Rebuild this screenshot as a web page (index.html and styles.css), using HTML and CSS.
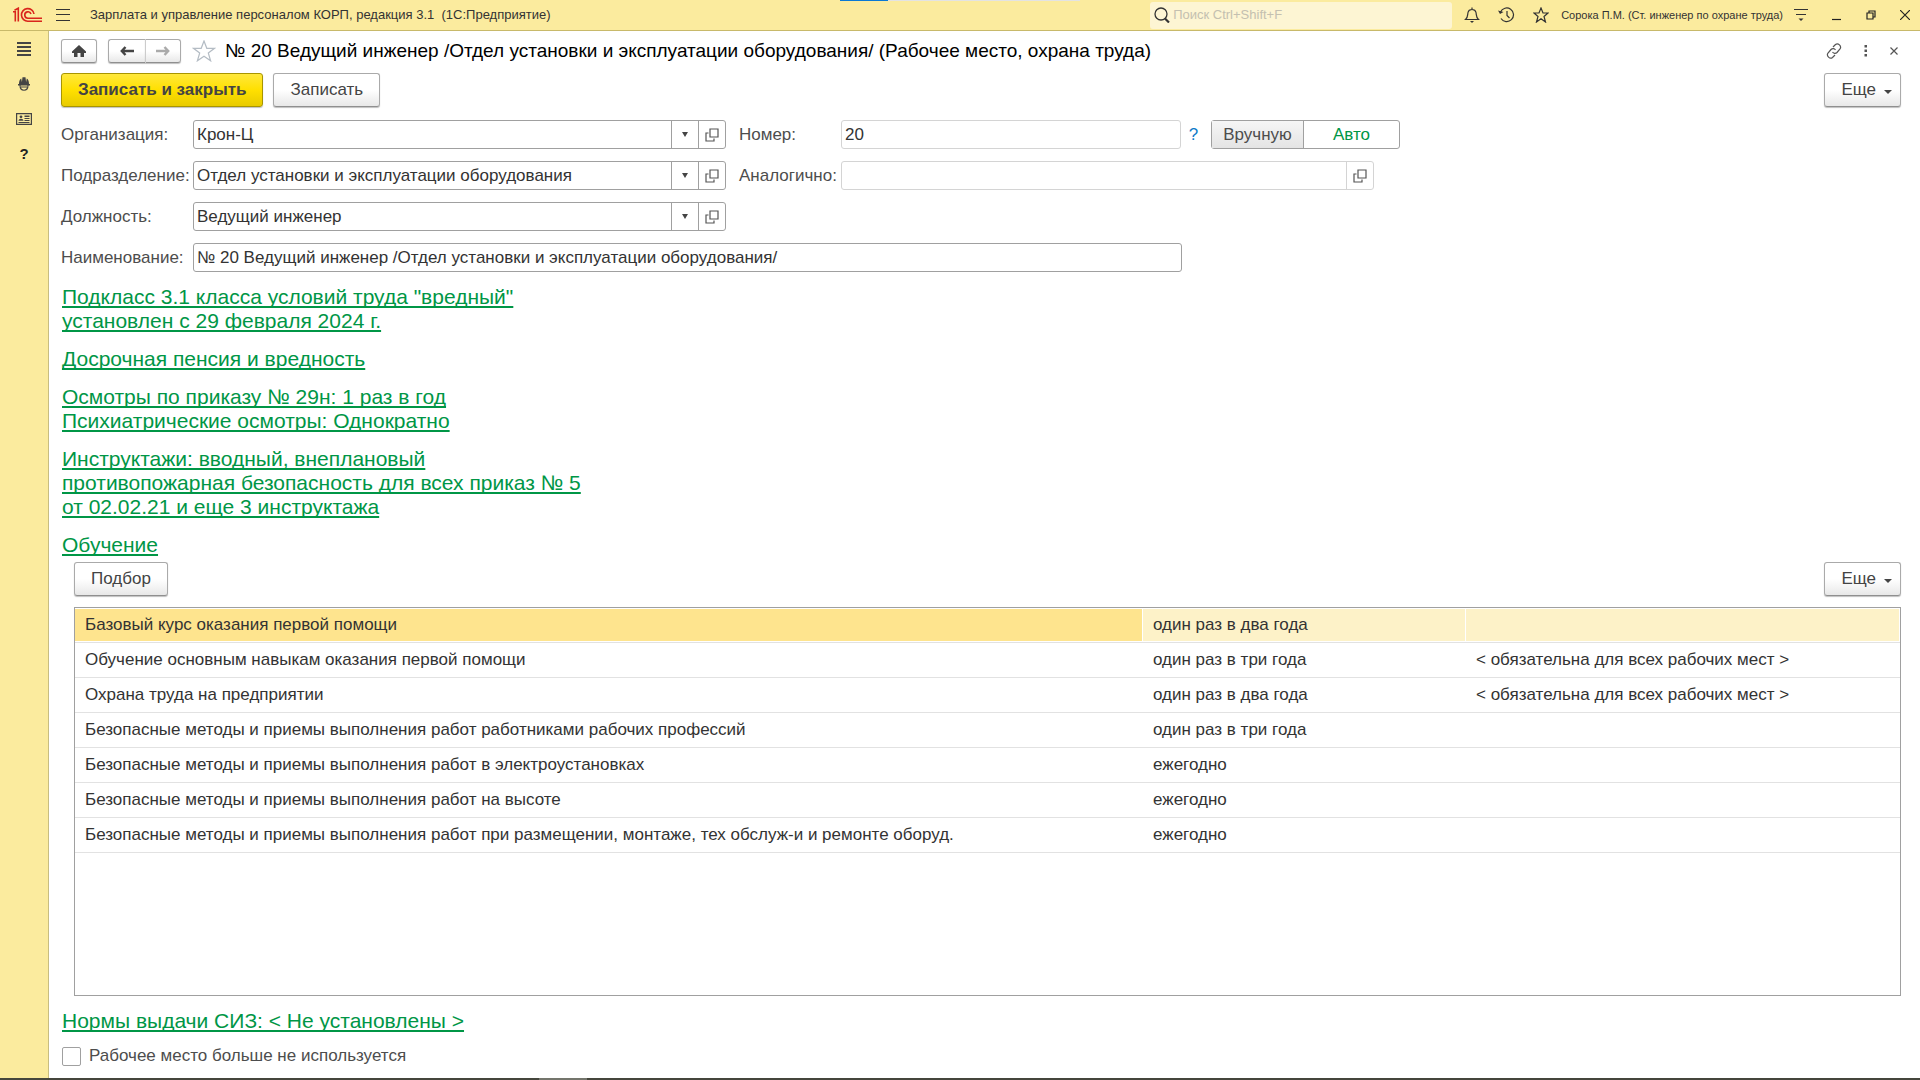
FILE: index.html
```html
<!DOCTYPE html>
<html lang="ru">
<head>
  <meta charset="UTF-8" />
  <title>Рабочее место, охрана труда</title>
  <link rel="stylesheet" href="styles.css">
</head>
<body>

  <!-- Title bar -->
  <header class="topbar">
    <svg class="logo" width="30" height="16" viewBox="0 0 30 16" fill="none" stroke="#d9251c" stroke-width="1.600">
      <path d="M1 4.800H3.300V14.500M2.500 3.200L6.300 1.200V14.500" />
      <path d="M22 7A6.300 6.300 0 1 0 16 14.200H30" />
      <path d="M19 7A3.200 3.200 0 1 0 16 11.200H30" />
    </svg>
    <button class="icon-btn menu-btn" aria-label="Меню">
      <svg width="14" height="12" viewBox="0 0 14 12" stroke="#333" stroke-width="1"><path d="M0 .5H14M0 5.500H14M0 11.500H14" /></svg>
    </button>
    <div class="app-title">Зарплата и управление персоналом КОРП, редакция 3.1&nbsp; (1С:Предприятие)</div>
    <div class="load-bar"><span></span></div>

    <div class="search">
      <svg width="16" height="16" viewBox="0 0 16 16" fill="none" stroke="#333"><circle cx="7" cy="7" r="6" stroke-width="1.300" /><path d="M11 11.500L15 15.500" stroke-width="2.200" /></svg>
      <input type="text" placeholder="Поиск Ctrl+Shift+F" aria-label="Поиск">
    </div>

    <div class="top-icons">
      <button class="icon-btn" aria-label="Уведомления">
        <svg width="16" height="16" viewBox="0 0 16 16" fill="none" stroke="#333" stroke-width="1.200"><path d="M1.500 12.500C4 10.500 3.500 8 4 5.500C4.500 3 6 2.500 8 2.500S11.500 3 12 5.500C12.500 8 12 10.500 14.500 12.500ZM8 0.500V2.500" /><path d="M6 14H10L8 16Z" fill="#333" stroke="none" /></svg>
      </button>
      <button class="icon-btn" aria-label="История">
        <svg width="17" height="16" viewBox="0 0 17 16" fill="none" stroke="#333" stroke-width="1.200"><path d="M2.500 5A6.800 6.800 0 1 1 3 11.500M9 4V8.500L11.500 11" /><path d="M0 3.500L2 7L5.500 5Z" fill="#333" stroke="none" /></svg>
      </button>
      <button class="icon-btn" aria-label="Избранное">
        <svg width="16" height="16" viewBox="0 0 16 16" fill="none" stroke="#333" stroke-width="1.200"><path d="M8 1L10 6H15L11 9.500L12.500 15L8 11.800L3.500 15L5 9.500L1 6H6Z" /></svg>
      </button>
    </div>
    <div class="user">Сорока П.М. (Ст. инженер по охране труда)</div>
    <div class="window-icons">
      <button class="icon-btn" aria-label="Настройки">
        <svg width="14" height="14" viewBox="0 0 14 14" stroke="#333" stroke-width="1.200"><path d="M0 1.500H14M2 6.500H12" /><path d="M4.500 10.500H9.500L7 13Z" fill="#333" stroke="none" /></svg>
      </button>
      <button class="icon-btn" aria-label="Свернуть">
        <svg width="10" height="12" viewBox="0 0 10 12" stroke="#222" stroke-width="1.200"><path d="M0 10.500H9" /></svg>
      </button>
      <button class="icon-btn" aria-label="Развернуть">
        <svg width="10" height="10" viewBox="0 0 10 10" fill="none" stroke="#222" stroke-width="1.200"><path d="M1 3H7V9H1ZM3 3V1H9V7H7" /></svg>
      </button>
      <button class="icon-btn" aria-label="Закрыть">
        <svg width="10" height="10" viewBox="0 0 10 10" stroke="#222" stroke-width="1.200"><path d="M0 0L10 10M10 0L0 10" /></svg>
      </button>
    </div>
  </header>

  <div class="layout">
    <nav class="sidebar">
      <button class="icon-btn" aria-label="Разделы">
        <svg width="14" height="14" viewBox="0 0 14 14" fill="#444"><path d="M0 0H14V2H0ZM0 4H14V6H0ZM0 8H14V10H0ZM0 12H14V14H0Z" /></svg>
      </button>
      <button class="icon-btn" aria-label="Охрана труда">
        <svg width="12" height="14" viewBox="0 0 12 14" fill="#444"><path d="M1 7C1 4 1.800 2.300 3.200 1.500L3.900 5L4.500 .3H7.500L8.100 5L8.800 1.500C10.200 2.300 11 4 11 7H12V8.500H0V7Z" /><path d="M2 8C2 15 10 15 10 8M3 10H9" fill="none" stroke="#444" stroke-width="1.200" /></svg>
      </button>
      <button class="icon-btn" aria-label="Кадры">
        <svg width="16" height="12" viewBox="0 0 16 12" fill="#444"><path d="M.6.6H15.400V11.400H.6Z" fill="none" stroke="#444" stroke-width="1.200" /><circle cx="5" cy="3.800" r="1.400" /><path d="M2.500 7.800C2.500 5 7.500 5 7.500 7.800ZM8.500 2.500H13.500V4H8.500ZM8.500 5H13.500V6H8.500ZM8.500 7H13.500V8H8.500ZM2.500 9H13.500V10H2.500Z" /></svg>
      </button>
      <button class="icon-btn help" aria-label="Справка">?</button>
    </nav>

    <main class="page">
      <!-- Form header -->
      <div class="page-head">
        <button class="btn nav-btn" aria-label="Домой">
          <svg width="14" height="12" viewBox="0 0 14 12" fill="#444"><path d="M7 0L0 6.500V8H2V12H5.500V8H8.500V12H12V8H14V6.500Z" /></svg>
        </button>
        <div class="nav-pair">
          <button class="btn nav-btn" aria-label="Назад">
            <svg width="14" height="10" viewBox="0 0 14 10" fill="none" stroke="#444" stroke-width="2.400"><path d="M2 5H14M5.500 1L1.800 5L5.500 9" /></svg>
          </button>
          <button class="btn nav-btn" aria-label="Вперед">
            <svg width="14" height="10" viewBox="0 0 14 10" fill="none" stroke="#aaa" stroke-width="2.400"><path d="M0 5H12M8.500 1L12.200 5L8.500 9" /></svg>
          </button>
        </div>
        <button class="icon-btn" aria-label="В избранное">
          <svg width="24" height="22" viewBox="0 0 24 22" fill="none" stroke="#b4bcc4" stroke-width="1.200"><path d="M12 1L14.800 8.300H22.500L16.300 13L18.600 20.800L12 16.200L5.400 20.800L7.700 13L1.500 8.300H9.200Z" /></svg>
        </button>
        <h1>№ 20 Ведущий инженер /Отдел установки и эксплуатации оборудования/ (Рабочее место, охрана труда)</h1>
        <div class="page-tools">
          <button class="icon-btn" aria-label="Ссылка">
            <svg width="16" height="16" viewBox="0 0 16 16" fill="none" stroke="#555" stroke-width="1.200"><path d="M7 4L9.500 1.500C12 -.5 16 3 14 6L11 9.500C9.500 11 7.500 10.500 6.500 9M9 12L6.500 14.500C4 16.500 0 13 2 10L5 6.500C6.500 5 8.500 5.500 9.500 7" /></svg>
          </button>
          <button class="icon-btn" aria-label="Еще действия">
            <svg width="4" height="12" viewBox="0 0 4 12" fill="#555"><path d="M.5 0H3V2.500H.5ZM.5 4.500H3V7H.5ZM.5 9H3V11.500H.5Z" /></svg>
          </button>
          <button class="icon-btn" aria-label="Закрыть форму">
            <svg width="8" height="8" viewBox="0 0 8 8" stroke="#555" stroke-width="1.200"><path d="M0.500 0.500L7.500 7.500M7.500 0.500L0.500 7.500" /></svg>
          </button>
        </div>
      </div>

      <div class="commands">
        <button class="btn primary">Записать и закрыть</button>
        <button class="btn">Записать</button>
        <button class="btn more">Еще <span class="caret"></span></button>
      </div>

      <!-- Fields -->
      <div class="fields">
        <label for="org">Организация:</label>
        <div class="field">
          <input type="text" id="org" value="Крон-Ц">
          <button aria-label="Выбрать"><span class="caret"></span></button>
          <button aria-label="Открыть"><svg width="14" height="14" viewBox="0 0 14 14" fill="none" stroke="#555" stroke-width="1.200"><path d="M5 1H13V9H5ZM3.500 5H1V13H9V10.500" /></svg></button>
        </div>
        <label for="number">Номер:</label>
        <div class="number-row">
          <div class="field light"><input type="text" id="number" value="20"></div>
          <a class="hint" href="#">?</a>
          <div class="switch">
            <button class="pressed">Вручную</button>
            <button>Авто</button>
          </div>
        </div>

        <label for="dept">Подразделение:</label>
        <div class="field">
          <input type="text" id="dept" value="Отдел установки и эксплуатации оборудования">
          <button aria-label="Выбрать"><span class="caret"></span></button>
          <button aria-label="Открыть"><svg width="14" height="14" viewBox="0 0 14 14" fill="none" stroke="#555" stroke-width="1.200"><path d="M5 1H13V9H5ZM3.500 5H1V13H9V10.500" /></svg></button>
        </div>
        <label for="same">Аналогично:</label>
        <div class="field light same">
          <input type="text" id="same">
          <button aria-label="Открыть"><svg width="14" height="14" viewBox="0 0 14 14" fill="none" stroke="#555" stroke-width="1.200"><path d="M5 1H13V9H5ZM3.500 5H1V13H9V10.500" /></svg></button>
        </div>

        <label for="post">Должность:</label>
        <div class="field">
          <input type="text" id="post" value="Ведущий инженер">
          <button aria-label="Выбрать"><span class="caret"></span></button>
          <button aria-label="Открыть"><svg width="14" height="14" viewBox="0 0 14 14" fill="none" stroke="#555" stroke-width="1.200"><path d="M5 1H13V9H5ZM3.500 5H1V13H9V10.500" /></svg></button>
        </div>

        <label class="name-label" for="name">Наименование:</label>
        <div class="field name">
          <input type="text" id="name" value="№ 20 Ведущий инженер /Отдел установки и эксплуатации оборудования/">
        </div>
      </div>

      <!-- Sections -->
      <div class="links">
        <a href="#">Подкласс 3.1 класса условий труда "вредный"<br>установлен с 29 февраля 2024 г.</a>
        <a href="#">Досрочная пенсия и вредность</a>
        <a href="#">Осмотры по приказу № 29н: 1 раз в год<br>Психиатрические осмотры: Однократно</a>
        <a href="#">Инструктажи: вводный, внеплановый<br>противопожарная безопасность для всех приказ № 5<br>от 02.02.21 и еще 3 инструктажа</a>
        <a href="#">Обучение</a>
      </div>

      <section class="training">
        <div class="commands">
          <button class="btn">Подбор</button>
          <button class="btn more">Еще <span class="caret"></span></button>
        </div>
        <div class="table-box">
          <table>
            <colgroup><col class="col-course"><col class="col-period"><col></colgroup>
            <tbody>
              <tr class="selected"><td class="current">Базовый курс оказания первой помощи</td><td>один раз в два года</td><td></td></tr>
              <tr><td>Обучение основным навыкам оказания первой помощи</td><td>один раз в три года</td><td>&lt; обязательна для всех рабочих мест &gt;</td></tr>
              <tr><td>Охрана труда на предприятии</td><td>один раз в два года</td><td>&lt; обязательна для всех рабочих мест &gt;</td></tr>
              <tr><td>Безопасные методы и приемы выполнения работ работниками рабочих профессий</td><td>один раз в три года</td><td></td></tr>
              <tr><td>Безопасные методы и приемы выполнения работ в электроустановках</td><td>ежегодно</td><td></td></tr>
              <tr><td>Безопасные методы и приемы выполнения работ на высоте</td><td>ежегодно</td><td></td></tr>
              <tr><td>Безопасные методы и приемы выполнения работ при размещении, монтаже, тех обслуж-и и ремонте оборуд.</td><td>ежегодно</td><td></td></tr>
            </tbody>
          </table>
        </div>
      </section>

      <div class="links">
        <a href="#">Нормы выдачи СИЗ: &lt; Не установлены &gt;</a>
      </div>
      <div class="unused">
        <input type="checkbox" id="unused">
        <label for="unused">Рабочее место больше не используется</label>
      </div>
    </main>
  </div>

  <div class="bottom-edge"><span></span></div>

</body>
</html>
```

FILE: styles.css
```css
* {
  box-sizing: border-box;
}

body {
  margin: 0;
  height: 100vh;
  display: flex;
  flex-direction: column;
  font-family: "Liberation Sans", Arial, sans-serif;
  font-size: 17px;
  line-height: 20px;
  color: #333;
  background: white;
}

button,
input {
  font: inherit;
  color: inherit;
}

button {
  padding: 0;
  cursor: pointer;
}

svg {
  display: block;
  flex: none;
}

.icon-btn {
  display: flex;
  align-items: center;
  justify-content: center;
  border: none;
  background: none;
}

/* Title bar */
.topbar {
  position: relative;
  display: flex;
  align-items: center;
  height: 31px;
  padding: 0 10px 0 12px;
  background: #fbeb9e;
  border-bottom: 1px solid #c8b96a;
}

.menu-btn {
  margin: 0 20px 0 14px;
}

.app-title {
  font-size: 13px;
  white-space: nowrap;
}

.load-bar {
  position: absolute;
  top: 0;
  left: 840px;
  width: 240px;
  height: 1px;
  background: #e3e3e3;
}

.load-bar span {
  display: block;
  width: 48px;
  height: 1px;
  background: #0a78d4;
}

.search {
  display: flex;
  align-items: center;
  gap: 3px;
  width: 302px;
  height: 27px;
  margin-left: auto;
  padding-left: 4px;
  border-radius: 3px;
  background: #fdf5d3;
}

.search input {
  flex: 1;
  min-width: 0;
  padding: 0;
  border: none;
  outline: none;
  background: none;
  font-size: 13px;
}

.search input::placeholder {
  color: #c4c0b0;
}

.top-icons {
  display: flex;
  gap: 18px;
  margin: 0 12px;
}

.user {
  font-size: 11px;
  white-space: nowrap;
}

.window-icons {
  display: flex;
  align-items: center;
  gap: 24px;
  margin-left: 11px;
}

/* Layout */
.layout {
  flex: 1;
  display: flex;
  min-height: 0;
}

.sidebar {
  width: 49px;
  display: flex;
  flex-direction: column;
  align-items: center;
  gap: 15px;
  padding-top: 8px;
  background: #fbeb9e;
  border-right: 1px solid #c8bd80;
}

.sidebar .icon-btn {
  width: 30px;
  height: 20px;
}

.sidebar .help {
  font-weight: bold;
  font-size: 15px;
  color: #222;
}

.page {
  flex: 1;
  min-width: 0;
  display: flex;
  flex-direction: column;
  padding: 8px 19px 12px 12px;
}

/* Buttons */
.btn {
  display: flex;
  align-items: center;
  justify-content: center;
  height: 34px;
  padding: 0 16px;
  border: 1px solid #aaa;
  border-bottom-color: #8f8f8f;
  border-radius: 3px;
  background: linear-gradient(white 50%, #e8e8e8);
  box-shadow: 0 1px 1px rgba(0, 0, 0, 0.25);
  color: #444;
}

.primary {
  background: linear-gradient(#ffe83c, #ffe000 50%, #e8cb00);
  border-color: #a89500;
  font-weight: bold;
}

.caret {
  border: 4px solid transparent;
  border-top-color: #444;
  border-bottom: none;
}

.more {
  gap: 8px;
  margin-left: auto;
  padding: 0 8px 0 16px;
}

.more .caret {
  margin-top: 4px;
}

.page-head {
  display: flex;
  align-items: center;
  height: 24px;
}

.nav-btn {
  width: 36px;
  height: 24px;
  padding: 0;
}

.nav-pair {
  display: flex;
  margin: 0 11px;
}

.nav-pair .nav-btn:first-child {
  width: 37px;
  border-right: none;
  border-radius: 3px 0 0 3px;
}

.nav-pair .nav-btn:last-child {
  border-radius: 0 3px 3px 0;
  border-left-color: #ccc;
}

h1 {
  margin: 0 0 0 9px;
  font-size: 19px;
  font-weight: normal;
  color: black;
  white-space: nowrap;
}

.page-tools {
  display: flex;
  align-items: center;
  gap: 22px;
  margin: 0 3px 0 auto;
}

.commands {
  display: flex;
  gap: 10px;
}

.page > .commands {
  margin-top: 10px;
}

/* Fields */
.fields {
  display: grid;
  grid-template-columns: 119px 533px 89px auto;
  column-gap: 13px;
  row-gap: 12px;
  align-items: center;
  justify-content: start;
  margin-top: 13px;
}

.fields label,
.unused label {
  color: #4d4d4d;
  white-space: nowrap;
}

.field {
  display: flex;
  height: 29px;
  border: 1px solid #a0a0a0;
  border-radius: 3px;
  background: white;
}

.field input {
  flex: 1;
  min-width: 0;
  padding: 0 3px;
  border: none;
  outline: none;
  background: none;
}

.field button {
  width: 27px;
  display: flex;
  align-items: center;
  justify-content: center;
  border: none;
  border-left: 1px solid #a0a0a0;
  background: none;
}

.field .caret {
  border-width: 5px 3px 0;
}

.light,
.light button {
  border-color: #d4d4d4;
}

.number-row {
  display: flex;
  align-items: center;
}

.number-row .field {
  width: 340px;
}

.hint {
  width: 30px;
  padding-right: 5px;
  text-align: center;
  color: #0f7ac8;
  text-decoration: none;
}

.switch {
  display: flex;
  height: 29px;
  border: 1px solid #a0a0a0;
  border-radius: 3px;
}

.switch button {
  width: 95px;
  border: none;
  background: none;
  color: #009646;
}

.switch .pressed {
  width: 92px;
  border-right: 1px solid #a0a0a0;
  background: linear-gradient(#f6f6f6, #e4e4e4);
  color: #4d4d4d;
}

.same {
  width: 533px;
}

.name-label {
  grid-column: 1;
}

.name {
  grid-column: 2 / 5;
  width: 989px;
}

/* Links */
.links {
  display: flex;
  flex-direction: column;
  align-items: flex-start;
  gap: 14px;
  margin: 13px 1px 0;
}

.links a {
  font-size: 21px;
  line-height: 24px;
  color: #009646;
  text-decoration-thickness: 2px;
  text-underline-offset: 2px;
  text-decoration-skip-ink: none;
}

/* Training */
.training {
  flex: 1;
  min-height: 0;
  display: flex;
  flex-direction: column;
  margin: 5px 0 0 13px;
}

.table-box {
  flex: 1;
  margin-top: 11px;
  border: 1px solid #a0a0a0;
}

table {
  width: 100%;
  table-layout: fixed;
  border-spacing: 0;
}

.col-course {
  width: 1068px;
}

.col-period {
  width: 323px;
}

td {
  height: 35px;
  padding: 0 10px;
  border-bottom: 1px solid #e2e2e2;
  white-space: nowrap;
}

.selected td {
  background: #fdf2c8;
  box-shadow: inset 0 1px white, inset -1px -1px white;
}

.selected .current {
  background: #fee48e;
}

.unused {
  display: flex;
  align-items: center;
  gap: 8px;
  margin: 13px 1px 0;
}

.unused input {
  appearance: none;
  width: 19px;
  height: 19px;
  margin: 0;
  border: 1px solid #a0a0a0;
  border-radius: 2px;
  background: white;
}

.bottom-edge {
  height: 2px;
  padding-left: 539px;
  background: #45463c;
}

.bottom-edge span {
  display: block;
  width: 48px;
  height: 2px;
  background: #74756c;
}
```
